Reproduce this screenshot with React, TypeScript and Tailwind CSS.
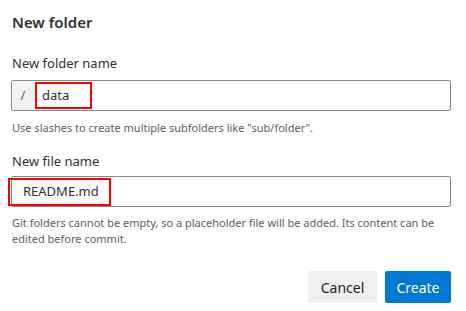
export default function App() {
  return (
    <div
      className="w-[466px] h-[311px] bg-white text-[#323130] overflow-hidden"
      style={{ fontFamily: '"Noto Sans", "Open Sans", sans-serif' }}
    >
      <div className="pl-[11px] pr-[15px] pt-[12px]">
        <h2 className="pl-[1px] text-[15px] font-semibold leading-[20px]">New folder</h2>

        <div className="mt-[22px] pl-[1px] text-[13px] leading-[18px]">New folder name</div>
        <div className="relative mt-[8px] flex h-[31px] border border-[#8a8886] rounded-[2px]">
          <div className="flex w-[22px] items-center justify-center bg-[#f3f2f1] text-[13px] text-[#605e5c]">
            /
          </div>
          <div className="flex items-center pl-[8px] text-[13px]">data</div>
          <div className="absolute left-[23px] top-[1px] h-[27px] w-[57px] border-[2.5px] border-[#ff0000]" />
        </div>
        <p className="mt-[9px] pl-[1px] text-[11px] leading-[15px] text-[#605e5c]">
          Use slashes to create multiple subfolders like "sub/folder".
        </p>

        <div className="mt-[17px] pl-[1px] text-[13px] leading-[18px]">New file name</div>
        <div className="relative mt-[6px] flex h-[31px] border border-[#8a8886] rounded-[2px]">
          <div className="flex items-center pl-[11px] text-[13px]">README.md</div>
          <div className="absolute left-[-4px] top-[1px] h-[28px] w-[103px] border-[2.5px] border-[#ff0000]" />
        </div>
        <p className="mt-[8px] pl-[1px] text-[11px] leading-[16px] text-[#605e5c]">
          Git folders cannot be empty, so a placeholder file will be added. Its content can be
          edited before commit.
        </p>

        <div className="mt-[24px] flex justify-end gap-[8px]">
          <button className="h-[32px] w-[69px] rounded-[2px] bg-[#efefef] text-[14px] text-[#201f1e]">
            Cancel
          </button>
          <button className="h-[32px] w-[66px] rounded-[2px] bg-[#0078d4] text-[14px] text-white">
            Create
          </button>
        </div>
      </div>
    </div>
  );
}
